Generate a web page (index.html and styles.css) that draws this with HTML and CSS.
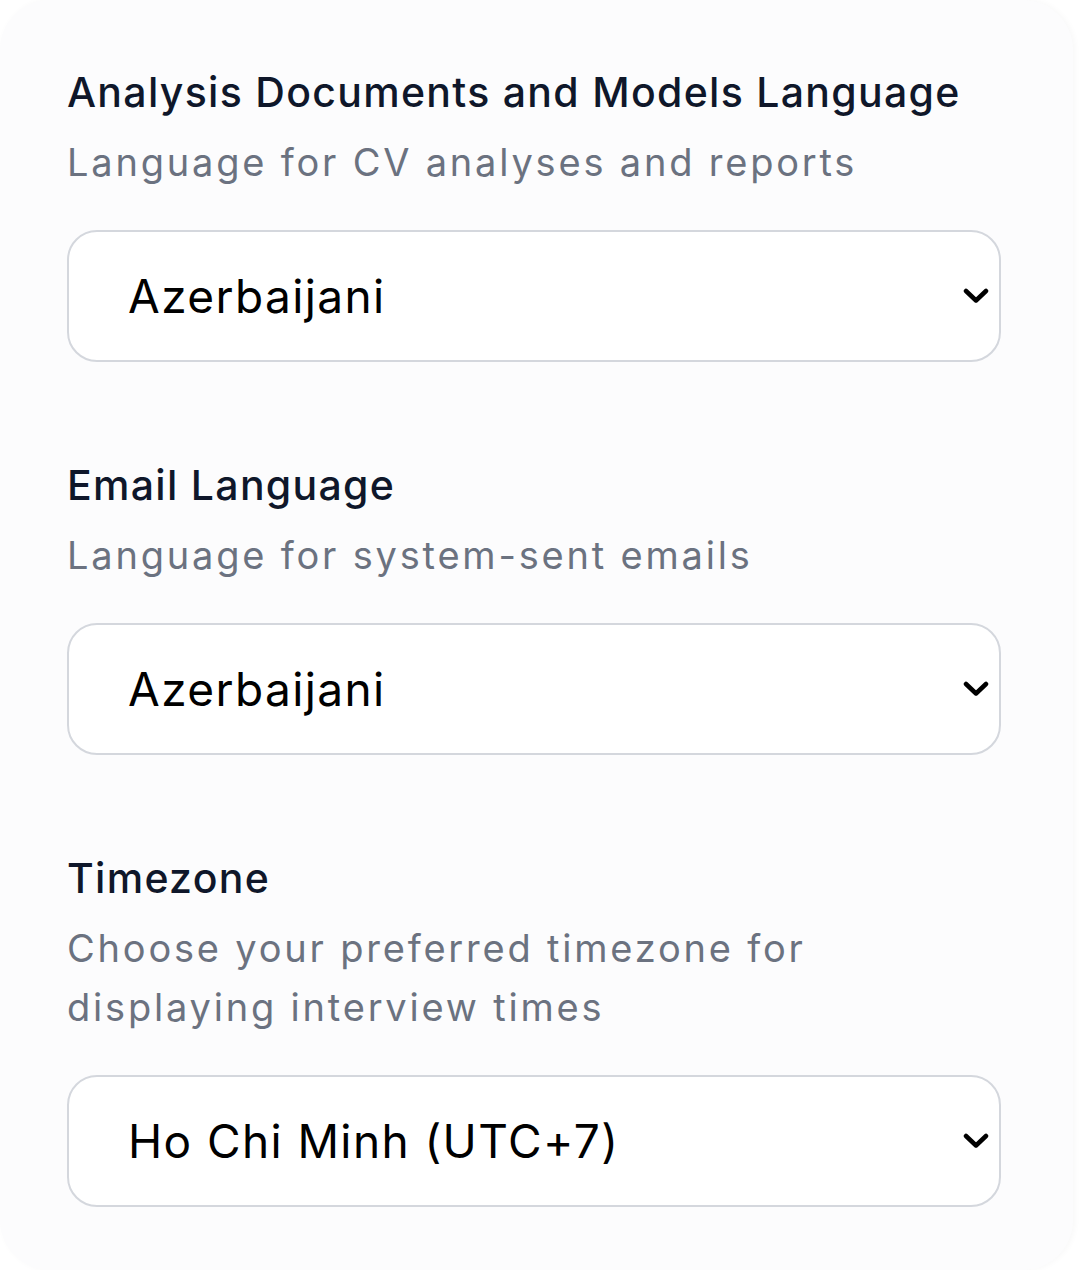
FILE: index.html
```html
<!DOCTYPE html>
<html lang="en">
<head>
    <meta charset="UTF-8">
    <meta name="viewport" content="width=device-width, initial-scale=1.0">
    <title>Preferences</title>
    <link rel="stylesheet" href="styles.css">
</head>
<body>
    <div class="card">
        <div class="field">
            <label class="field-label" for="docLang">Analysis Documents and Models Language</label>
            <p class="field-hint">Language for CV analyses and reports</p>
            <div class="select-wrap">
                <select id="docLang" class="select">
                    <option>Azerbaijani</option>
                    <option>English</option>
                    <option>Turkish</option>
                </select>
                <svg class="chevron" viewBox="0 0 26 16" width="26" height="16">
                    <polyline points="3,3 13,12.5 23,3" fill="none" stroke="#000" stroke-width="4.5" stroke-linecap="round" stroke-linejoin="round"/>
                </svg>
            </div>
        </div>

        <div class="field">
            <label class="field-label" for="mailLang">Email Language</label>
            <p class="field-hint">Language for system-sent emails</p>
            <div class="select-wrap">
                <select id="mailLang" class="select">
                    <option>Azerbaijani</option>
                    <option>English</option>
                    <option>Turkish</option>
                </select>
                <svg class="chevron" viewBox="0 0 26 16" width="26" height="16">
                    <polyline points="3,3 13,12.5 23,3" fill="none" stroke="#000" stroke-width="4.5" stroke-linecap="round" stroke-linejoin="round"/>
                </svg>
            </div>
        </div>

        <div class="field">
            <label class="field-label" for="tz">Timezone</label>
            <p class="field-hint">Choose your preferred timezone for displaying interview times</p>
            <div class="select-wrap">
                <select id="tz" class="select">
                    <option>Ho Chi Minh (UTC+7)</option>
                    <option>Baku (UTC+4)</option>
                    <option>London (UTC+0)</option>
                </select>
                <svg class="chevron" viewBox="0 0 26 16" width="26" height="16">
                    <polyline points="3,3 13,12.5 23,3" fill="none" stroke="#000" stroke-width="4.5" stroke-linecap="round" stroke-linejoin="round"/>
                </svg>
            </div>
        </div>
    </div>
</body>
</html>
```

FILE: styles.css
```css
body {
    margin: 0;
    padding: 0;
    background-color: #ffffff;
    font-family: Inter, "Noto Sans", sans-serif;
}

.card {
    width: 1073px;
    height: 1270px;
    box-sizing: border-box;
    padding: 63px 72px 0 67px;
    background-color: #fcfcfd;
    border-radius: 50px;
    box-shadow: 2px 0 6px rgba(0, 0, 0, 0.03);
}

.field {
    margin-bottom: 94px;
}

.field:last-child {
    margin-bottom: 0;
}

.field-label {
    display: block;
    font-size: 41px;
    line-height: 58px;
    font-weight: 500;
    letter-spacing: 1.3px;
    color: #0f172a;
}

.field-hint {
    margin: 12px 0 38px;
    font-size: 38px;
    line-height: 59px;
    letter-spacing: 2.8px;
    color: #6b7280;
}

.select-wrap {
    position: relative;
}

.select {
    display: block;
    width: 100%;
    height: 132px;
    box-sizing: border-box;
    padding: 0 70px 0 59px;
    border: 2px solid #d4d7dd;
    border-radius: 30px;
    background-color: #ffffff;
    font-family: Inter, "Noto Sans", sans-serif;
    font-size: 46px;
    letter-spacing: 1.4px;
    color: #000000;
    -webkit-appearance: none;
    appearance: none;
    outline: none;
}

.chevron {
    position: absolute;
    right: 12px;
    top: 58px;
    pointer-events: none;
}
```
